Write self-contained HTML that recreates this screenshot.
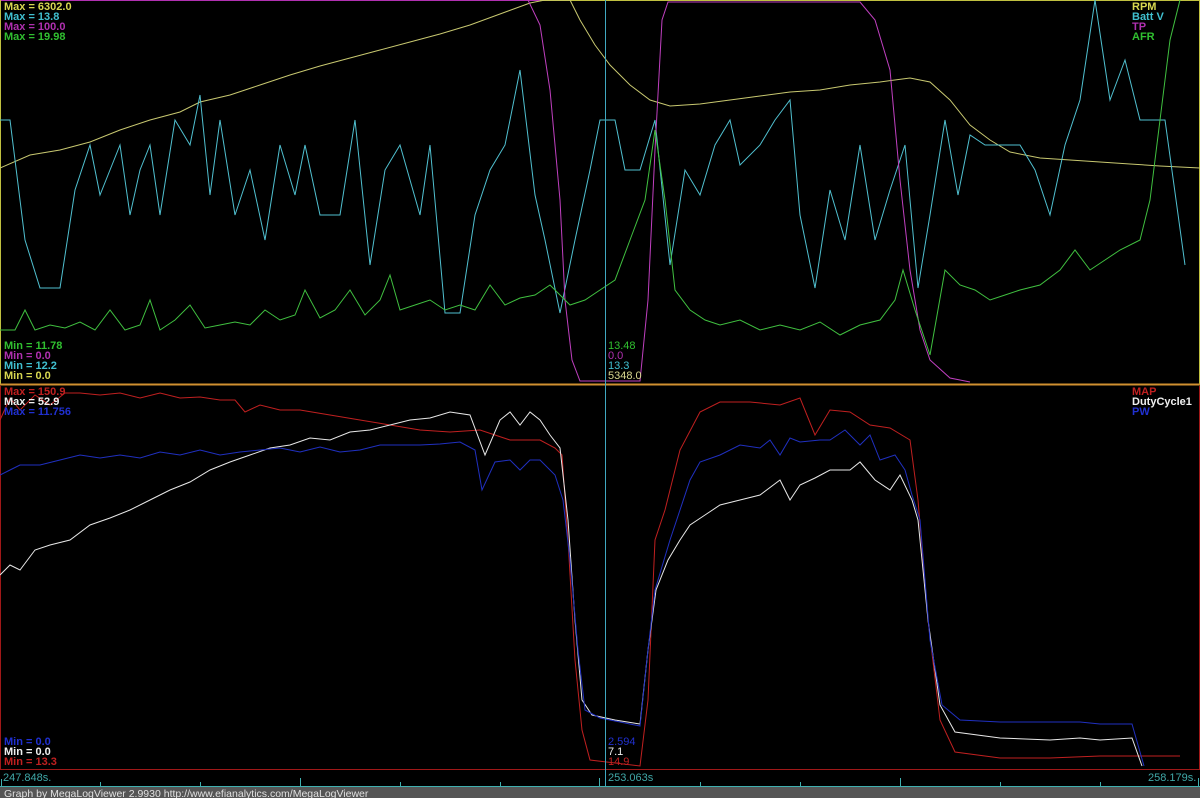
<!DOCTYPE html>
<html><head><meta charset="utf-8"><style>
html,body{margin:0;padding:0;background:#000;width:1200px;height:798px;overflow:hidden}
svg{display:block}
text{font-family:"Liberation Sans",sans-serif;font-size:11px}
.b{font-weight:bold}
</style></head><body>
<svg width="1200" height="798" viewBox="0 0 1200 798">
<rect width="1200" height="798" fill="#000"/>
<!-- borders -->
<line x1="0" y1="0.5" x2="1200" y2="0.5" stroke="#c0c040"/>
<line x1="0" y1="0.5" x2="540" y2="0.5" stroke="#b030b0"/>
<line x1="0.5" y1="0" x2="0.5" y2="384" stroke="#c0c040"/>
<line x1="1199.5" y1="0" x2="1199.5" y2="384" stroke="#c0c040"/>
<line x1="0" y1="384.5" x2="1200" y2="384.5" stroke="#d09030" stroke-width="2"/>
<line x1="0.5" y1="386" x2="0.5" y2="770" stroke="#a01818"/>
<line x1="1199.5" y1="386" x2="1199.5" y2="770" stroke="#a01818"/>
<line x1="0" y1="769.5" x2="1200" y2="769.5" stroke="#a01818"/>
<!-- timeline -->
<line x1="0" y1="786.5" x2="1200" y2="786.5" stroke="#40b0b0"/>
<g stroke="#40b0b0">
<line x1="1.5" y1="779" x2="1.5" y2="786"/><line x1="100.5" y1="782" x2="100.5" y2="786"/><line x1="200.5" y1="782" x2="200.5" y2="786"/><line x1="300.5" y1="778" x2="300.5" y2="786"/><line x1="400.5" y1="782" x2="400.5" y2="786"/><line x1="500.5" y1="782" x2="500.5" y2="786"/><line x1="599.5" y1="778" x2="599.5" y2="786"/><line x1="700.5" y1="782" x2="700.5" y2="786"/><line x1="800.5" y1="782" x2="800.5" y2="786"/><line x1="900.5" y1="778" x2="900.5" y2="786"/><line x1="1000.5" y1="782" x2="1000.5" y2="786"/><line x1="1100.5" y1="782" x2="1100.5" y2="786"/><line x1="1198.5" y1="778" x2="1198.5" y2="786"/>
</g>
<rect x="0" y="787" width="1200" height="11" fill="#555"/>
<text x="4" y="797" fill="#e0e0e0" style="font-size:10.5px">Graph by MegaLogViewer 2.9930 http://www.efianalytics.com/MegaLogViewer</text>
<text x="3" y="781" fill="#40a8a8">247.848s.</text>
<text x="608" y="781" fill="#40a8a8">253.063s</text>
<text x="1148" y="781" fill="#40a8a8">258.179s.</text>

<g fill="none" stroke-width="1">
<!-- RPM -->
<polyline stroke="#c8c870" points="0,168 30,155 60,150 90,142 120,130 150,120 180,112 200,102 230,95 260,85 290,75 320,66 350,58 380,50 410,42 440,34 470,25 500,14 530,3 545,0 570,0 580,20 595,45 610,65 630,85 650,100 670,106 700,104 730,100 760,96 790,92 820,90 850,85 880,82 910,78 930,82 950,100 970,125 990,140 1010,152 1040,158 1070,160 1100,162 1130,164 1160,166 1200,168"/>
<!-- Batt V -->
<polyline stroke="#50c0d0" points="0,120 10,120 25,240 40,288 60,288 75,190 90,145 100,195 110,170 120,145 130,215 140,170 150,145 160,215 175,120 190,145 200,95 210,195 220,120 235,215 250,170 265,240 280,145 295,195 305,145 320,215 340,215 355,120 370,265 385,170 400,145 420,215 430,145 445,313 460,313 475,215 490,170 505,145 520,70 535,195 545,240 560,313 575,240 590,170 600,120 615,120 625,170 640,170 655,120 670,265 685,170 700,195 715,145 730,120 740,165 760,145 775,120 790,100 800,215 815,288 830,190 845,240 860,145 875,240 890,190 905,145 918,288 930,215 945,120 958,195 970,135 985,145 1000,145 1020,145 1035,170 1050,215 1065,145 1080,100 1095,0 1110,100 1125,60 1140,120 1165,120 1185,265"/>
<!-- TP -->
<polyline stroke="#c040c0" points="528,0 540,25 550,90 560,200 565,300 572,360 580,381 640,381 648,300 655,150 662,20 668,2 860,2 875,20 890,70 900,180 910,270 920,330 930,360 950,378 970,382"/>
<!-- AFR -->
<polyline stroke="#40c040" points="0,330 15,330 25,310 35,330 50,325 65,328 80,322 95,330 110,310 125,330 140,325 150,300 160,330 175,320 190,305 205,328 220,325 235,322 250,325 265,310 280,320 295,315 305,290 320,318 335,310 350,290 365,315 380,300 390,275 400,310 415,305 430,300 445,310 460,305 475,310 490,285 505,305 520,298 535,295 550,285 560,295 570,305 585,300 600,290 615,280 630,240 645,200 655,130 665,200 675,290 690,310 705,320 720,325 740,320 760,330 780,325 800,330 820,322 840,335 860,325 880,320 895,300 903,270 915,310 930,355 945,270 960,285 975,290 990,300 1005,295 1020,290 1040,285 1060,270 1075,250 1090,270 1105,260 1120,250 1140,240 1150,200 1160,120 1170,40 1180,0"/>
<!-- MAP -->
<polyline stroke="#c02020" points="0,420 10,398 20,410 35,395 50,405 65,393 80,393 100,395 120,393 140,398 160,393 180,398 200,397 220,400 235,400 245,412 260,405 280,410 300,410 330,415 360,420 390,425 420,430 450,432 480,430 510,440 540,440 555,448 562,455 568,540 575,660 582,730 590,760 640,766 648,700 655,540 665,510 680,450 700,412 720,402 750,402 780,405 800,398 815,435 830,410 850,412 870,425 890,428 910,440 918,500 928,620 940,720 955,752 1000,758 1050,758 1100,756 1180,756"/>
<!-- Duty -->
<polyline stroke="#e8e8e8" points="0,575 10,565 20,570 35,550 50,545 70,540 90,525 110,518 130,510 150,500 170,490 190,482 210,470 230,462 250,455 270,448 290,445 310,438 330,440 350,432 370,430 390,425 410,420 430,418 450,412 470,415 485,455 500,420 510,412 520,425 530,412 540,420 550,435 560,448 568,520 575,620 582,700 592,715 615,720 640,724 648,650 656,590 668,560 680,540 690,525 705,515 720,505 740,500 760,495 780,480 790,500 800,485 815,478 830,470 850,470 860,462 875,480 890,490 900,475 912,500 918,520 928,620 940,705 955,732 1000,738 1050,740 1080,738 1100,740 1132,738 1142,766"/>
<!-- PW -->
<polyline stroke="#2030c0" points="0,475 10,470 20,465 40,465 60,460 80,455 100,458 120,455 140,458 160,452 180,455 200,450 220,455 240,452 260,450 280,448 300,452 320,447 340,452 360,450 380,445 400,445 420,445 440,444 460,442 475,450 482,490 495,462 510,460 520,470 530,460 540,460 555,475 563,500 570,560 578,650 585,710 600,718 620,722 640,726 648,650 655,590 670,540 690,480 700,462 720,455 740,445 760,448 770,440 780,455 790,438 800,442 820,440 830,440 845,430 860,445 870,435 880,460 895,455 905,470 912,495 920,520 930,640 942,705 960,720 1000,722 1050,722 1080,722 1100,724 1132,724 1144,766"/>
</g>
<!-- cursor -->
<line x1="605.5" y1="0" x2="605.5" y2="786" stroke="#40a8c0"/>

<!-- top labels -->
<text class="b" x="4" y="10" fill="#d8d850">Max = 6302.0</text>
<text class="b" x="4" y="20" fill="#40c0d0">Max = 13.8</text>
<text class="b" x="4" y="30" fill="#b030b0">Max = 100.0</text>
<text class="b" x="4" y="40" fill="#30c030">Max = 19.98</text>
<text class="b" x="1132" y="10" fill="#d8d850">RPM</text>
<text class="b" x="1132" y="20" fill="#40c0d0">Batt V</text>
<text class="b" x="1132" y="30" fill="#b030b0">TP</text>
<text class="b" x="1132" y="40" fill="#30c030">AFR</text>
<text class="b" x="4" y="349" fill="#30c030">Min = 11.78</text>
<text class="b" x="4" y="359" fill="#b030b0">Min = 0.0</text>
<text class="b" x="4" y="369" fill="#40c0d0">Min = 12.2</text>
<text class="b" x="4" y="379" fill="#d8d850">Min = 0.0</text>
<text x="608" y="349" fill="#30c030">13.48</text>
<text x="608" y="359" fill="#b030b0">0.0</text>
<text x="608" y="369" fill="#40c0d0">13.3</text>
<text x="608" y="379" fill="#d8d890">5348.0</text>
<!-- bottom labels -->
<text class="b" x="4" y="395" fill="#c02020">Max = 150.9</text>
<text class="b" x="4" y="405" fill="#f0f0f0">Max = 52.9</text>
<text class="b" x="4" y="415" fill="#2030d0">Max = 11.756</text>
<text class="b" x="1132" y="395" fill="#c02020">MAP</text>
<text class="b" x="1132" y="405" fill="#f0f0f0">DutyCycle1</text>
<text class="b" x="1132" y="415" fill="#2030d0">PW</text>
<text class="b" x="4" y="745" fill="#2030d0">Min = 0.0</text>
<text class="b" x="4" y="755" fill="#f0f0f0">Min = 0.0</text>
<text class="b" x="4" y="765" fill="#c02020">Min = 13.3</text>
<text x="608" y="745" fill="#2030d0">2.594</text>
<text x="608" y="755" fill="#f0f0f0">7.1</text>
<text x="608" y="765" fill="#c02020">14.9</text>
</svg>
</body></html>
